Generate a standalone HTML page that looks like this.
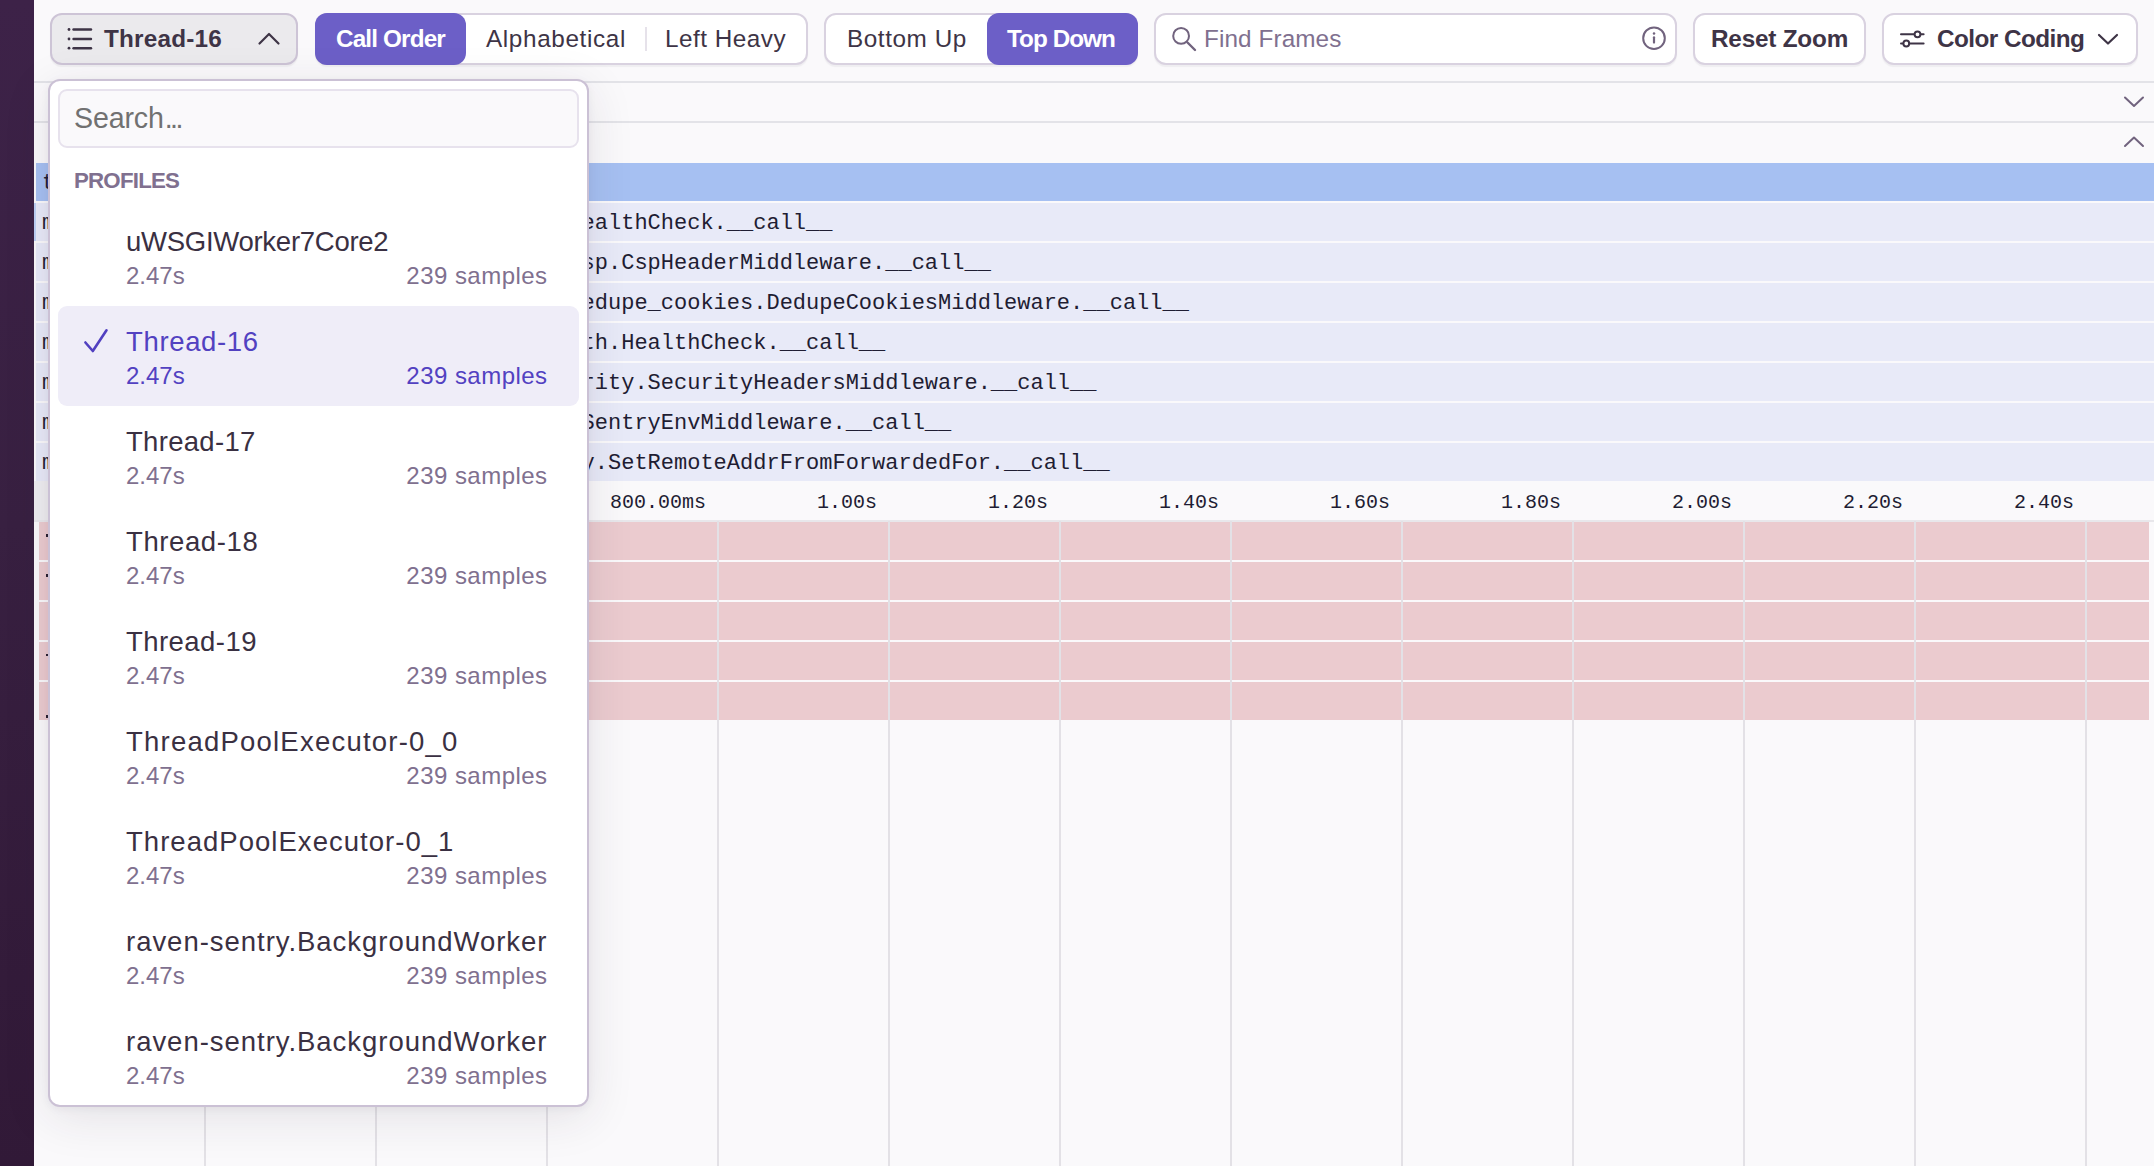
<!DOCTYPE html><html><head><meta charset="utf-8"><style>
*{box-sizing:border-box;margin:0;padding:0}
html,body{width:2154px;height:1166px;overflow:hidden;background:#faf9fb;font-family:"Liberation Sans", sans-serif;}
.a{position:absolute}
.t{position:absolute;white-space:pre;line-height:1}
.btn{position:absolute;top:13px;height:52px;border:2px solid #d9d2e0;border-radius:12px;background:#fff;box-shadow:0 2px 1px rgba(43,34,51,0.05)}
.row{position:absolute;height:38px}
.mono{font-family:"Liberation Mono", monospace;color:#1f1d33}
.grid{position:absolute;top:521px;width:2px;height:645px;background:#e3e1e6}
</style></head><body>
<div class="a" style="left:34px;top:81px;width:2120px;height:2px;background:#e3e3e8"></div>
<div class="a" style="left:34px;top:121px;width:2120px;height:2px;background:#e3e3e8"></div>
<svg class="a" style="left:2120px;top:90px" width="28" height="24" viewBox="0 0 28 24"><path d="M5 7.5 L14 16 L23 7.5" fill="none" stroke="#71637e" stroke-width="2" stroke-linecap="round" stroke-linejoin="round"/></svg>
<svg class="a" style="left:2120px;top:130px" width="28" height="24" viewBox="0 0 28 24"><path d="M5 16 L14 7.5 L23 16" fill="none" stroke="#71637e" stroke-width="2" stroke-linecap="round" stroke-linejoin="round"/></svg>
<div class="row" style="left:36px;top:163px;width:2118px;background:#a6c0f2"></div>
<div class="t mono" style="left:42.0px;top:173.15px;font-size:22px">t</div>
<div class="row" style="left:36px;top:203px;width:2118px;background:#e8eaf8"></div>
<div class="t mono" style="left:42.0px;top:213.15px;font-size:22px">m</div>
<div class="t mono" style="left:581.60px;top:213.15px;font-size:22px">ealthCheck.__call__</div>
<div class="row" style="left:36px;top:243px;width:2118px;background:#e8eaf8"></div>
<div class="t mono" style="left:42.0px;top:253.15px;font-size:22px">m</div>
<div class="t mono" style="left:581.60px;top:253.15px;font-size:22px">sp.CspHeaderMiddleware.__call__</div>
<div class="row" style="left:36px;top:283px;width:2118px;background:#e8eaf8"></div>
<div class="t mono" style="left:42.0px;top:293.15px;font-size:22px">m</div>
<div class="t mono" style="left:581.60px;top:293.15px;font-size:22px">edupe_cookies.DedupeCookiesMiddleware.__call__</div>
<div class="row" style="left:36px;top:323px;width:2118px;background:#e8eaf8"></div>
<div class="t mono" style="left:42.0px;top:333.15px;font-size:22px">m</div>
<div class="t mono" style="left:581.60px;top:333.15px;font-size:22px">th.HealthCheck.__call__</div>
<div class="row" style="left:36px;top:363px;width:2118px;background:#e8eaf8"></div>
<div class="t mono" style="left:42.0px;top:373.15px;font-size:22px">m</div>
<div class="t mono" style="left:581.60px;top:373.15px;font-size:22px">rity.SecurityHeadersMiddleware.__call__</div>
<div class="row" style="left:36px;top:403px;width:2118px;background:#e8eaf8"></div>
<div class="t mono" style="left:42.0px;top:413.15px;font-size:22px">m</div>
<div class="t mono" style="left:581.60px;top:413.15px;font-size:22px">SentryEnvMiddleware.__call__</div>
<div class="row" style="left:36px;top:443px;width:2118px;background:#e8eaf8"></div>
<div class="t mono" style="left:42.0px;top:453.15px;font-size:22px">m</div>
<div class="t mono" style="left:581.60px;top:453.15px;font-size:22px">y.SetRemoteAddrFromForwardedFor.__call__</div>
<div class="a" style="left:34px;top:203px;width:2px;height:38px;background:#bdd0f5"></div>
<div class="a" style="left:34px;top:481px;width:16px;height:40px;background:#efeef1"></div>
<div class="t mono" style="left:97px;width:96px;text-align:right;top:492.68px;font-size:20px">200.00ms</div>
<div class="t mono" style="left:268px;width:96px;text-align:right;top:492.68px;font-size:20px">400.00ms</div>
<div class="t mono" style="left:439px;width:96px;text-align:right;top:492.68px;font-size:20px">600.00ms</div>
<div class="t mono" style="left:610px;width:96px;text-align:right;top:492.68px;font-size:20px">800.00ms</div>
<div class="t mono" style="left:817px;width:60px;text-align:right;top:492.68px;font-size:20px">1.00s</div>
<div class="t mono" style="left:988px;width:60px;text-align:right;top:492.68px;font-size:20px">1.20s</div>
<div class="t mono" style="left:1159px;width:60px;text-align:right;top:492.68px;font-size:20px">1.40s</div>
<div class="t mono" style="left:1330px;width:60px;text-align:right;top:492.68px;font-size:20px">1.60s</div>
<div class="t mono" style="left:1501px;width:60px;text-align:right;top:492.68px;font-size:20px">1.80s</div>
<div class="t mono" style="left:1672px;width:60px;text-align:right;top:492.68px;font-size:20px">2.00s</div>
<div class="t mono" style="left:1843px;width:60px;text-align:right;top:492.68px;font-size:20px">2.20s</div>
<div class="t mono" style="left:2014px;width:60px;text-align:right;top:492.68px;font-size:20px">2.40s</div>
<div class="a" style="left:34px;top:520px;width:2120px;height:1.5px;background:#e8e7eb"></div>
<div class="row" style="left:39px;top:522px;width:2110px;background:#ebcbcf"></div>
<div class="row" style="left:39px;top:562px;width:2110px;background:#ebcbcf"></div>
<div class="row" style="left:39px;top:602px;width:2110px;background:#ebcbcf"></div>
<div class="row" style="left:39px;top:642px;width:2110px;background:#ebcbcf"></div>
<div class="row" style="left:39px;top:682px;width:2110px;background:#ebcbcf"></div>
<div class="a" style="left:46px;top:534px;width:4px;height:2.5px;background:#2a2030"></div>
<div class="a" style="left:46px;top:574px;width:4px;height:2.5px;background:#2a2030"></div>
<div class="a" style="left:48.5px;top:618px;width:1.5px;height:12px;background:#2a2030"></div>
<div class="a" style="left:46px;top:653.5px;width:4px;height:2.5px;background:#2a2030"></div>
<div class="a" style="left:46px;top:715px;width:4px;height:2.5px;background:#2a2030"></div>
<div class="grid" style="left:204px"></div>
<div class="grid" style="left:375px"></div>
<div class="grid" style="left:546px"></div>
<div class="grid" style="left:717px"></div>
<div class="grid" style="left:888px"></div>
<div class="grid" style="left:1059px"></div>
<div class="grid" style="left:1230px"></div>
<div class="grid" style="left:1401px"></div>
<div class="grid" style="left:1572px"></div>
<div class="grid" style="left:1743px"></div>
<div class="grid" style="left:1914px"></div>
<div class="grid" style="left:2085px"></div>
<div class="a" style="left:0;top:0;width:34px;height:1166px;background:linear-gradient(to bottom,#3d2248 0%,#382041 45%,#311937 100%)"></div>
<div class="btn" style="left:50px;width:248px;background:#ebeaed;border-color:#cdc4d6"></div>
<svg class="a" style="left:66px;top:26px" width="28" height="26" viewBox="0 0 28 26"><g fill="#3e3446"><circle cx="3" cy="3.5" r="1.4"/><circle cx="3" cy="13" r="1.4"/><circle cx="3" cy="22.2" r="1.4"/></g><g stroke="#3e3446" stroke-width="2.4" stroke-linecap="round"><path d="M7.5 3.5H25"/><path d="M7.5 13H25"/><path d="M7.5 22.2H25"/></g></svg>
<div class="t" style="left:104px;top:26.83px;font-size:24.3px;font-weight:700;color:#3e3446;letter-spacing:0.2px">Thread-16</div>
<svg class="a" style="left:255px;top:27px" width="28" height="22" viewBox="0 0 28 22"><path d="M4.5 16.5 L14 7 L23.5 16.5" fill="none" stroke="#3e3446" stroke-width="2.2" stroke-linecap="round" stroke-linejoin="round"/></svg>
<div class="btn" style="left:315px;width:493px"></div>
<div class="a" style="left:315px;top:13px;width:151px;height:52px;border-radius:12px;background:#6c5fc7"></div>
<div class="t" style="left:336px;top:26.83px;font-size:24.3px;font-weight:700;color:#fff;letter-spacing:-0.86px">Call Order</div>
<div class="t" style="left:486px;top:26.83px;font-size:24.3px;color:#3e3446;letter-spacing:0.63px">Alphabetical</div>
<div class="a" style="left:645px;top:27px;width:2px;height:24px;background:#e6e2ea"></div>
<div class="t" style="left:665px;top:26.83px;font-size:24.3px;color:#3e3446;letter-spacing:0.5px">Left Heavy</div>
<div class="btn" style="left:824px;width:314px"></div>
<div class="a" style="left:987px;top:13px;width:151px;height:52px;border-radius:12px;background:#6c5fc7"></div>
<div class="t" style="left:847px;top:26.83px;font-size:24.3px;color:#3e3446;letter-spacing:0.57px">Bottom Up</div>
<div class="t" style="left:1007px;top:26.83px;font-size:24.3px;font-weight:700;color:#fff;letter-spacing:-0.96px">Top Down</div>
<div class="btn" style="left:1154px;width:523px"></div>
<svg class="a" style="left:1168px;top:23px" width="32" height="32" viewBox="0 0 32 32"><circle cx="13.1" cy="12.9" r="7.9" fill="none" stroke="#71637e" stroke-width="2"/><path d="M19.5 19.5L27 27" stroke="#71637e" stroke-width="2.4" stroke-linecap="round"/></svg>
<div class="t" style="left:1204px;top:26.83px;font-size:24.3px;color:#80708f;letter-spacing:0.1px">Find Frames</div>
<svg class="a" style="left:1640px;top:24px" width="28" height="28" viewBox="0 0 28 28"><circle cx="14" cy="14.2" r="10.8" fill="none" stroke="#71637e" stroke-width="2"/><path d="M14 13.3V18.6" stroke="#71637e" stroke-width="2.2" stroke-linecap="round"/><circle cx="14" cy="9.4" r="1.25" fill="#71637e"/></svg>
<div class="btn" style="left:1693px;width:173px"></div>
<div class="t" style="left:1711px;top:26.83px;font-size:24.3px;font-weight:700;color:#3e3446;letter-spacing:-0.2px">Reset Zoom</div>
<div class="btn" style="left:1882px;width:256px"></div>
<svg class="a" style="left:1897px;top:26px" width="30" height="26" viewBox="0 0 30 26"><g stroke="#3e3446" stroke-width="2" stroke-linecap="round" fill="none"><path d="M4 8.3H17"/><path d="M24 8.3H26.6"/><circle cx="20.5" cy="8.3" r="2.9"/><path d="M4 17.5H6"/><path d="M12.4 17.5H26.6"/><circle cx="9.3" cy="17.5" r="2.9"/></g></svg>
<div class="t" style="left:1937px;top:26.83px;font-size:24.3px;font-weight:700;color:#3e3446;letter-spacing:-0.55px">Color Coding</div>
<svg class="a" style="left:2094px;top:27px" width="28" height="22" viewBox="0 0 28 22"><path d="M5 8 L14 16.5 L23 8" fill="none" stroke="#3e3446" stroke-width="2.2" stroke-linecap="round" stroke-linejoin="round"/></svg>
<div class="a" style="left:48px;top:79px;width:541px;height:1028px;background:#fff;border:2px solid #cbc1d5;border-radius:12px;box-shadow:0 10px 48px rgba(43,34,51,0.11),0 2px 8px rgba(43,34,51,0.05)"></div>
<div class="a" style="left:58px;top:89px;width:521px;height:59px;background:#faf9fb;border:2px solid #e7e2ed;border-radius:9px"></div>
<div class="t" style="left:74px;top:103.79px;font-size:28.6px;color:#717171;letter-spacing:-0.15px">Search<span style="letter-spacing:-2.6px;margin-left:1px">...</span></div>
<div class="t" style="left:74px;top:170.12px;font-size:22.3px;font-weight:700;color:#80708f;letter-spacing:-0.8px">PROFILES</div>
<div class="t" style="left:126px;top:227.72px;font-size:27.5px;color:#3a3042;letter-spacing:-0.27px">uWSGIWorker7Core2</div>
<div class="t" style="left:126px;top:263.68px;font-size:24px;color:#80708f">2.47s</div>
<div class="t" style="left:300px;width:247.5px;text-align:right;top:263.68px;font-size:24px;color:#80708f;letter-spacing:0.46px">239 samples</div>
<div class="a" style="left:58px;top:306px;width:521px;height:100px;background:#efedf8;border-radius:9px"></div>
<svg class="a" style="left:80px;top:326px" width="32" height="30" viewBox="0 0 32 30"><path d="M5.4 16.5L12.8 25L26.5 4.3" fill="none" stroke="#5140c0" stroke-width="2.6" stroke-linecap="round" stroke-linejoin="round"/></svg>
<div class="t" style="left:126px;top:327.72px;font-size:27.5px;color:#5241c1;letter-spacing:0.65px">Thread-16</div>
<div class="t" style="left:126px;top:363.68px;font-size:24px;color:#5241c1">2.47s</div>
<div class="t" style="left:300px;width:247.5px;text-align:right;top:363.68px;font-size:24px;color:#5241c1;letter-spacing:0.46px">239 samples</div>
<div class="t" style="left:126px;top:427.72px;font-size:27.5px;color:#3a3042;letter-spacing:0.3px">Thread-17</div>
<div class="t" style="left:126px;top:463.68px;font-size:24px;color:#80708f">2.47s</div>
<div class="t" style="left:300px;width:247.5px;text-align:right;top:463.68px;font-size:24px;color:#80708f;letter-spacing:0.46px">239 samples</div>
<div class="t" style="left:126px;top:527.72px;font-size:27.5px;color:#3a3042;letter-spacing:0.6px">Thread-18</div>
<div class="t" style="left:126px;top:563.68px;font-size:24px;color:#80708f">2.47s</div>
<div class="t" style="left:300px;width:247.5px;text-align:right;top:563.68px;font-size:24px;color:#80708f;letter-spacing:0.46px">239 samples</div>
<div class="t" style="left:126px;top:627.72px;font-size:27.5px;color:#3a3042;letter-spacing:0.45px">Thread-19</div>
<div class="t" style="left:126px;top:663.68px;font-size:24px;color:#80708f">2.47s</div>
<div class="t" style="left:300px;width:247.5px;text-align:right;top:663.68px;font-size:24px;color:#80708f;letter-spacing:0.46px">239 samples</div>
<div class="t" style="left:126px;top:727.72px;font-size:27.5px;color:#3a3042;letter-spacing:1.22px">ThreadPoolExecutor-0_0</div>
<div class="t" style="left:126px;top:763.68px;font-size:24px;color:#80708f">2.47s</div>
<div class="t" style="left:300px;width:247.5px;text-align:right;top:763.68px;font-size:24px;color:#80708f;letter-spacing:0.46px">239 samples</div>
<div class="t" style="left:126px;top:827.72px;font-size:27.5px;color:#3a3042;letter-spacing:1.03px">ThreadPoolExecutor-0_1</div>
<div class="t" style="left:126px;top:863.68px;font-size:24px;color:#80708f">2.47s</div>
<div class="t" style="left:300px;width:247.5px;text-align:right;top:863.68px;font-size:24px;color:#80708f;letter-spacing:0.46px">239 samples</div>
<div class="t" style="left:126px;top:927.72px;font-size:27.5px;color:#3a3042;letter-spacing:0.97px">raven-sentry.BackgroundWorker</div>
<div class="t" style="left:126px;top:963.68px;font-size:24px;color:#80708f">2.47s</div>
<div class="t" style="left:300px;width:247.5px;text-align:right;top:963.68px;font-size:24px;color:#80708f;letter-spacing:0.46px">239 samples</div>
<div class="t" style="left:126px;top:1027.72px;font-size:27.5px;color:#3a3042;letter-spacing:0.97px">raven-sentry.BackgroundWorker</div>
<div class="t" style="left:126px;top:1063.68px;font-size:24px;color:#80708f">2.47s</div>
<div class="t" style="left:300px;width:247.5px;text-align:right;top:1063.68px;font-size:24px;color:#80708f;letter-spacing:0.46px">239 samples</div>
</body></html>
